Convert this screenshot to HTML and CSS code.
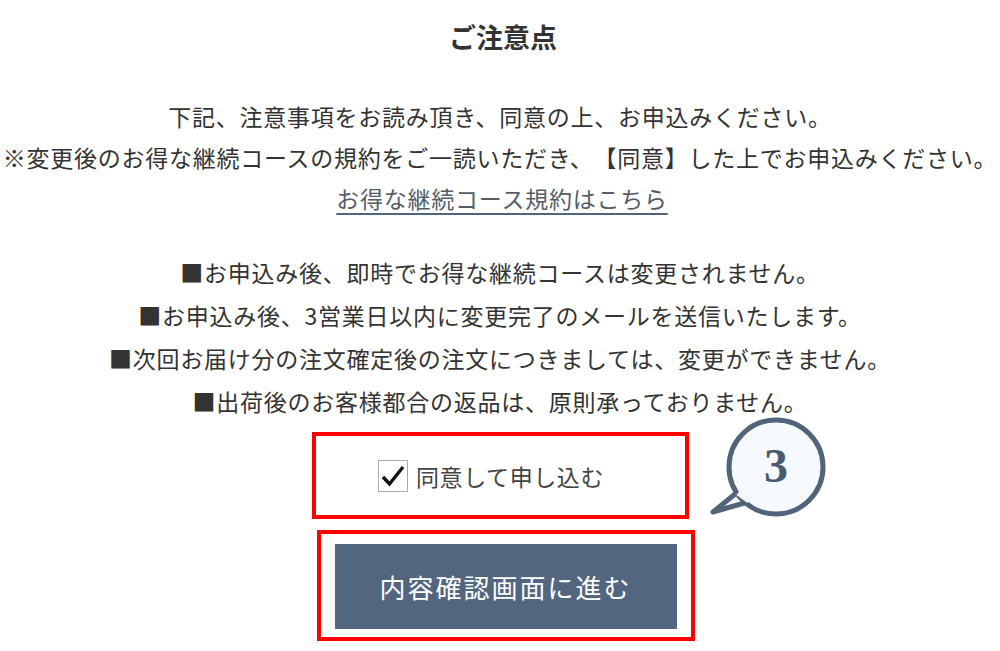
FILE: index.html
```html
<!DOCTYPE html>
<html lang="ja">
<head>
    <meta charset="UTF-8">
    <meta name="viewport" content="width=device-width, initial-scale=1.0">
    <title>ご注意点</title>
    <link rel="stylesheet" href="styles.css">
</head>
<body>

    <h1 class="title">ご注意点</h1>

    <div class="notice">
        <p>下記、注意事項をお読み頂き、同意の上、お申込みください。</p>
        <p>※変更後のお得な継続コースの規約をご一読いただき、【同意】した上でお申込みください。</p>
        <p><a href="#" class="terms-link">お得な継続コース規約はこちら</a></p>
    </div>

    <ul class="rules">
        <li>■お申込み後、即時でお得な継続コースは変更されません。</li>
        <li>■お申込み後、3営業日以内に変更完了のメールを送信いたします。</li>
        <li>■次回お届け分の注文確定後の注文につきましては、変更ができません。</li>
        <li>■出荷後のお客様都合の返品は、原則承っておりません。</li>
    </ul>

    <div class="actions">
        <div class="highlight agree-box">
            <label class="agree">
                <span class="check">
                    <svg width="24" height="22" viewBox="0 0 24 22"><path d="M2 12 L8.5 19 L22 2" fill="none" stroke="#111" stroke-width="3.4"/></svg>
                </span>
                同意して申し込む
            </label>
        </div>

        <!-- step bubble -->
        <div class="bubble">
            <svg width="124" height="108" viewBox="0 0 124 108">
                <path d="M42 88 L7 98 L34 76" fill="#f6f9fd" stroke="#52647a" stroke-width="5" stroke-linejoin="round"/>
                <circle cx="70" cy="53" r="47" fill="#f6f9fd" stroke="#52647a" stroke-width="5"/>
                <path d="M32 79 L43 87" stroke="#f6f9fd" stroke-width="5"/>
            </svg>
            <span class="bubble-num">3</span>
        </div>

        <div class="highlight submit-box">
            <button class="submit">内容確認画面に進む</button>
        </div>
    </div>

</body>
</html>
```

FILE: styles.css
```css
body {
    margin: 0;
    font-family: "Noto Sans CJK JP", "Noto Sans", sans-serif;
    color: #333;
    background: #fff;
    text-spacing-trim: space-all;
}

.title {
    margin: 19px 0 0;
    font-size: 27px;
    line-height: 36px;
    font-weight: bold;
    text-align: center;
    padding-left: 6px;
}

.notice { margin-top: 41px; text-align: center; }
.notice p, .rules li {
    margin: 0;
    font-size: 23px;
    letter-spacing: 0.75px;
}
.notice p { line-height: 41px; }

.terms-link {
    color: #555c66;
    letter-spacing: 0.75px;
    text-decoration: underline;
    text-decoration-color: #52647a;
    text-decoration-thickness: 2px;
    text-underline-offset: 5px;
    padding-left: 4px;
}

.rules {
    list-style: none;
    margin: 32px 0 0;
    padding: 0;
    text-align: center;
}
.rules li { line-height: 43px; }

.actions {
    position: relative;
    display: flex;
    flex-direction: column;
    align-items: center;
    margin-top: 9px;
}

.highlight { border: 4px solid #f00; }

.agree-box {
    width: 369px;
    height: 79px;
    display: flex;
    align-items: center;
    justify-content: center;
}

.agree {
    display: flex;
    align-items: center;
    gap: 8px;
    font-size: 23px;
    letter-spacing: 0.6px;
    color: #444;
    margin-left: -18px;
}

.check {
    width: 30px;
    height: 32px;
    border: 1px solid #aaa;
    box-sizing: border-box;
    display: flex;
    align-items: center;
    justify-content: center;
}

.submit-box {
    margin-top: 11px;
    margin-left: 11px;
    padding: 10px 14px 8px;
}

.submit {
    display: block;
    width: 342px;
    height: 85px;
    border: none;
    background: #52667f;
    color: #fff;
    font-family: inherit;
    font-size: 26px;
    letter-spacing: 2px;
    cursor: pointer;
}

.bubble {
    position: absolute;
    left: 706px;
    top: -18px;
    width: 124px;
    height: 108px;
}
.bubble svg { display: block; }
.bubble-num {
    position: absolute;
    left: 70px;
    top: 53px;
    transform: translate(-50%, -52%);
    font-family: "Liberation Serif", serif;
    font-weight: bold;
    font-size: 48px;
    color: #4a5a70;
}
```
